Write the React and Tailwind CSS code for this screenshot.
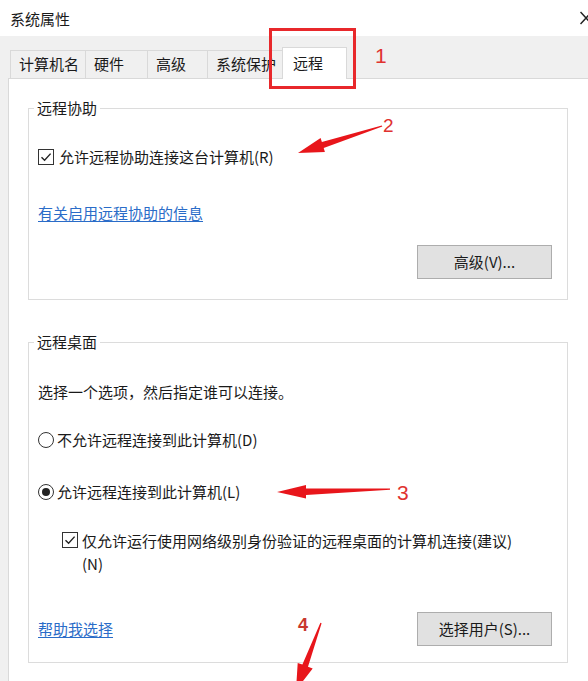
import React from 'react';

const font = "font-['Noto_Sans_CJK_SC',sans-serif]";

function CheckBox() {
  return (
    <span className="w-[16px] h-[16px] shrink-0 border border-[#333] bg-white flex items-center justify-center">
      <svg width="14" height="14" viewBox="0 0 14 14">
        <path d="M2.5 7.2 L5.6 10.3 L11.6 3.6" fill="none" stroke="#222" strokeWidth="1.4" />
      </svg>
    </span>
  );
}

function Radio({ checked }) {
  return (
    <span className="w-[16px] h-[16px] shrink-0 rounded-full border border-[#333] bg-white flex items-center justify-center">
      {checked && <span className="w-[8px] h-[8px] rounded-full bg-[#222]" />}
    </span>
  );
}

function Button({ children }) {
  return (
    <button className="w-[135px] h-[34px] bg-[#e1e1e1] border border-[#adadad] text-[15px] text-[#1a1a1a] flex items-center justify-center">
      {children}
    </button>
  );
}

function GroupBox({ title, className, children }) {
  return (
    <div className={`relative border border-[#dcdcdc] ${className}`}>
      <span className="absolute left-[5px] top-[-12px] px-[3px] bg-white leading-[22px] text-[15px]">{title}</span>
      {children}
    </div>
  );
}

function Tab({ label, w, selected }) {
  if (selected) {
    return (
      <div className={`relative z-10 -ml-[2px] mb-[-1px] h-[32px] ${w} bg-white border border-b-0 border-[#d9d9d9] pl-[10px] flex items-center text-[15px]`}>
        {label}
      </div>
    );
  }
  return (
    <div className={`h-[28px] ${w} border-l border-t border-r border-[#d9d9d9] -mr-[1px] pl-[8px] flex items-center text-[15px] overflow-hidden whitespace-nowrap`}>
      {label}
    </div>
  );
}

export default function App() {
  return (
    <div className={`relative w-[588px] h-[681px] overflow-hidden bg-white text-[#1a1a1a] flex flex-col ${font}`}>
      {/* title bar */}
      <div className="h-[36px] shrink-0 pl-[10px] flex items-center justify-between">
        <span className="text-[15px] leading-none">系统属性</span>
        <svg width="12" height="14" viewBox="0 0 12 14" className="shrink-0 -mr-[4px]">
          <path d="M0.5 1 L11.5 13 M11.5 1 L0.5 13" stroke="#222" strokeWidth="1.5" />
        </svg>
      </div>

      <div className="flex-1 bg-[#f0f0f0] flex flex-col">
        {/* tabs */}
        <div className="h-[42px] shrink-0 pl-[10px] flex items-end">
          <Tab label="计算机名" w="w-[76px]" />
          <Tab label="硬件" w="w-[63px]" />
          <Tab label="高级" w="w-[61px]" />
          <Tab label="系统保护" w="w-[78px]" />
          <Tab label="远程" w="w-[65px]" selected />
        </div>

        {/* panel */}
        <div className="flex-1 ml-[8px] bg-white border-l border-t border-[#d9d9d9] pl-[19px] pr-[20px] pt-[29px]">
          <GroupBox title="远程协助" className="pt-[37px] pl-[9px] pr-[15px] pb-[20px]">
            <div className="h-[22px] flex items-center gap-[5px] text-[15px]">
              <CheckBox />
              <span>允许远程协助连接这台计算机(R)</span>
            </div>
            <div className="mt-[34px] h-[22px] flex items-center text-[15px]">
              <span className="text-[#2a6cc8] underline underline-offset-2">有关启用远程协助的信息</span>
            </div>
            <div className="mt-[21px] flex justify-end">
              <Button>高级(V)...</Button>
            </div>
          </GroupBox>

          <GroupBox title="远程桌面" className="mt-[42px] pt-[38px] pl-[9px] pr-[15px] pb-[16px]">
            <div className="h-[22px] flex items-center text-[15px]">选择一个选项，然后指定谁可以连接。</div>
            <div className="mt-[26px] h-[22px] flex items-center gap-[3px] text-[15px]">
              <Radio />
              <span>不允许远程连接到此计算机(D)</span>
            </div>
            <div className="mt-[30px] h-[22px] flex items-center gap-[3px] text-[15px]">
              <Radio checked />
              <span>允许远程连接到此计算机(L)</span>
            </div>
            <div className="mt-[26px] pl-[24px] flex items-start gap-[4px] text-[15px] leading-[23px]">
              <span className="mt-[3px]"><CheckBox /></span>
              <span>仅允许运行使用网络级别身份验证的远程桌面的计算机连接(建议)<br />(N)</span>
            </div>
            <div className="mt-[37px] flex items-center justify-between">
              <span className="text-[15px] text-[#2a6cc8] underline underline-offset-2">帮助我选择</span>
              <Button>选择用户(S)...</Button>
            </div>
          </GroupBox>
        </div>
      </div>

      {/* annotations */}
      <div className="absolute left-[269px] top-[28px] w-[87px] h-[61px] border-[3px] border-[#e8282b] pointer-events-none" />
      <span className="absolute left-[375px] top-[45px] text-[21px] leading-none text-[#e0322f] font-['Liberation_Sans',sans-serif]">1</span>
      <span className="absolute left-[383px] top-[116px] text-[19px] leading-none text-[#e0322f] font-['Liberation_Sans',sans-serif]">2</span>
      <span className="absolute left-[397px] top-[482px] text-[21px] leading-none text-[#e0322f] font-['Liberation_Sans',sans-serif]">3</span>
      <span className="absolute left-[298px] top-[616px] text-[18px] leading-none font-bold text-[#c8372d] font-['Liberation_Sans',sans-serif]">4</span>
      <svg className="absolute inset-0 pointer-events-none" width="588" height="681" viewBox="0 0 588 681">
        <polygon fill="#e8161b" points="382.3,126.6 323.7,147.9 324.9,151.9 298,153 320.6,138.1 321.9,142.1 381.8,125.4" />
        <polygon fill="#e8161b" points="390,488.4 306,488.6 306,485 277,492 306,498.5 306,495 390,489.8" />
        <polygon fill="#e8161b" points="321.6,623.3 308,666.8 312.7,668.6 296,690 297.7,662.9 302.4,664.6 320.4,622.8" />
      </svg>
    </div>
  );
}
